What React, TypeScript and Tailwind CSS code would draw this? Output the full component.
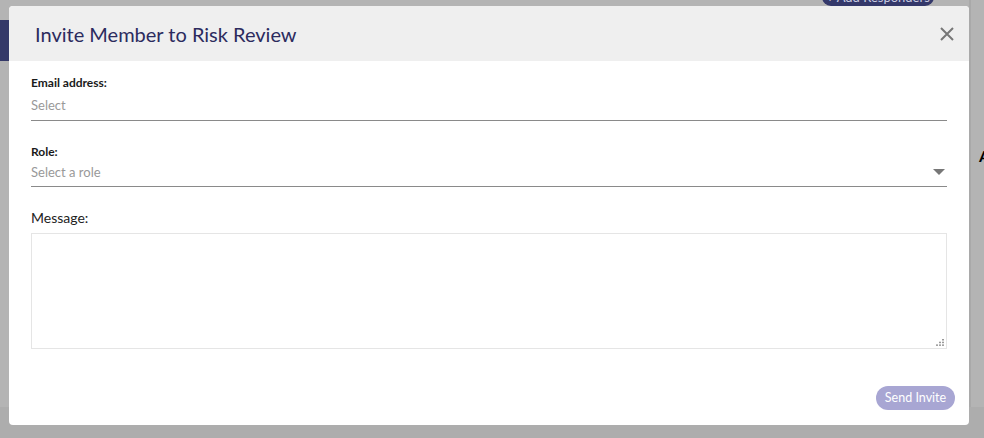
import { useState } from "react";

export default function App() {
  const [email, setEmail] = useState("");
  const [message, setMessage] = useState("");

  return (
    <div className="relative h-[438px] w-[984px] overflow-hidden font-['Lato',sans-serif]">
      {/* page behind the backdrop */}
      <div className="flex h-full flex-col bg-[#b4b4b4]">
        <div className="flex h-[407px]">
          <div className="w-[9px] shrink-0 pt-[20px]">
            <div className="h-[41px] bg-[#343868]" />
          </div>
          <div className="flex flex-1 justify-end pr-[35px]">
            <div className="-mt-[12px] flex h-[18px] w-[112px] items-end justify-center rounded-full bg-[#34386a] pb-[1px] text-[13px] leading-[16px] text-[#c9cbe0]">
              + Add Responders
            </div>
          </div>
          <div className="w-[2px] shrink-0 bg-[#a9a9a9]" />
          <div className="w-[13px] shrink-0 pl-[8px] pt-[146px] text-[16px] font-bold leading-[20px] text-black">A</div>
        </div>
        <div className="flex-1 bg-[#adadad]" />
      </div>

      {/* modal */}
      <div className="absolute left-[9px] top-[6px] flex h-[419px] w-[960px] flex-col overflow-hidden rounded-[4px] bg-white">
        <div className="flex h-[55px] shrink-0 items-center justify-between bg-[#efefef] pl-[26px] pr-[15px]">
          <h2 className="text-[20px] leading-[24px] text-[#2c2b5e]">Invite Member to Risk Review</h2>
          <button className="text-[#777]" aria-label="Close">
            <svg width="14" height="14" viewBox="0 0 14 14" fill="none" stroke="currentColor" strokeWidth="2">
              <path d="M1 1L13 13M13 1L1 13" />
            </svg>
          </button>
        </div>

        <div className="flex flex-1 flex-col px-[22px] pt-[14px]">
          <label className="text-[12px] font-bold leading-[16px] text-[#1a1a1a]">Email address:</label>
          <input
            value={email}
            onChange={e => setEmail(e.target.value)}
            placeholder="Select"
            className="border-b border-[#8a8a8a] pb-[5px] pt-[4px] text-[13px] leading-[20px] text-[#333] outline-none placeholder:text-[#999]"
          />

          <label className="mt-[23px] text-[12px] font-bold leading-[16px] text-[#1a1a1a]">Role:</label>
          <div className="flex items-center justify-between border-b border-[#8a8a8a] pb-[4px] pt-[2px]">
            <span className="text-[13px] leading-[20px] text-[#999]">Select a role</span>
            <svg width="12" height="6" viewBox="0 0 12 6" className="mr-[2px]">
              <path d="M0 0H12L6 6Z" fill="#777" />
            </svg>
          </div>

          <label className="mt-[21px] text-[14px] leading-[20px] text-[#222]">Message:</label>
          <div className="relative mt-[5px]">
            <textarea
              value={message}
              onChange={e => setMessage(e.target.value)}
              className="block h-[116px] w-full resize-none border border-[#e5e5e5] p-2 text-[13px] outline-none"
            />
            <svg width="8" height="7" viewBox="0 0 8 7" className="absolute bottom-[3px] right-[3px]" fill="#999">
              <rect x="6" y="0" width="2" height="1.5" />
              <rect x="3" y="2.7" width="2" height="1.5" />
              <rect x="6" y="2.7" width="2" height="1.5" />
              <rect x="0" y="5.4" width="2" height="1.5" />
              <rect x="3" y="5.4" width="2" height="1.5" />
              <rect x="6" y="5.4" width="2" height="1.5" />
            </svg>
          </div>

          <div className="mt-[37px] flex justify-end">
            <button className="-mr-[8px] h-[24px] w-[79px] rounded-full bg-[#a8a6d3] text-[12.5px] text-white">
              Send Invite
            </button>
          </div>
        </div>
      </div>
    </div>
  );
}
